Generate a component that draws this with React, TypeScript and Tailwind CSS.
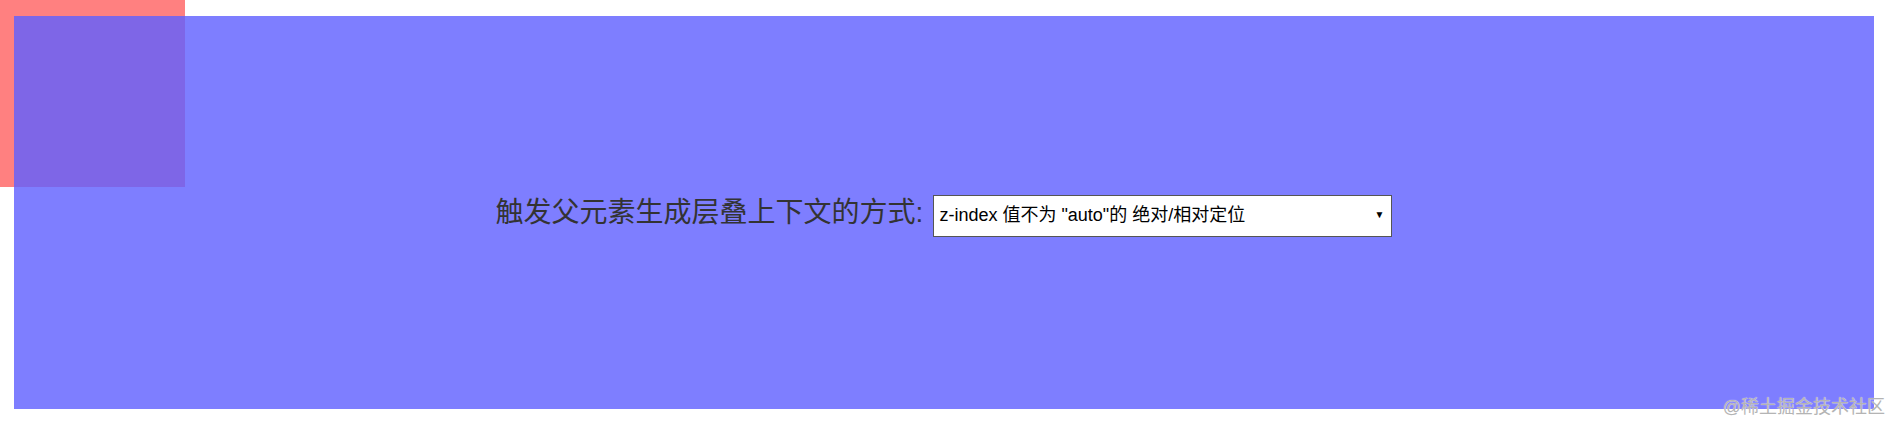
import { useState } from "react";

const options = [
  'z-index 值不为 "auto"的 绝对/相对定位',
  "opacity 属性值小于 1 的元素",
  "transform 属性值不为 none 的元素",
  'position 值为 "fixed"',
];

export default function App() {
  const [mode, setMode] = useState(options[0]);

  return (
    <main className="relative h-[424px] w-full overflow-hidden bg-white font-['Liberation_Sans','Noto_Sans_CJK_SC',sans-serif]">
      {/* child box sitting under the parent */}
      <div className="absolute left-0 top-0 h-[187px] w-[185px] bg-[#ff8080]" />

      <div className="pl-[14px] pr-4 pt-4 pb-[15px]">
        <div className="relative flex h-[393px] items-center justify-center gap-[10px] bg-[#6060ffcf]">
          <span className="text-[28px] leading-none text-[#333]">触发父元素生成层叠上下文的方式:</span>
          <div className="relative mt-[6px]">
            <select
              value={mode}
              onChange={(e) => setMode(e.target.value)}
              className="h-[42px] w-[459px] appearance-none border border-[#555] bg-white pl-[5px] text-[18px] text-black outline-none"
            >
              {options.map((o) => (
                <option key={o} value={o}>
                  {o}
                </option>
              ))}
            </select>
            <span className="pointer-events-none absolute right-[8px] top-[12px] text-[10px] text-black">▼</span>
          </div>
        </div>
      </div>

      <span className="absolute bottom-[8px] right-[5px] text-[18px] leading-none text-[#b4b4b4] [text-shadow:0_0_1px_#fff]">
        @稀土掘金技术社区
      </span>
    </main>
  );
}
